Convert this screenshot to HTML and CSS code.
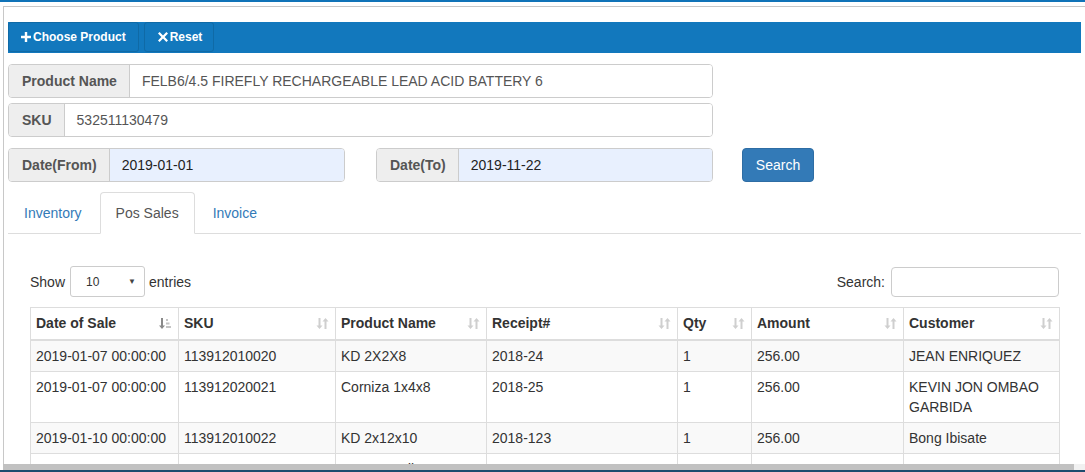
FILE: index.html
```html
<!DOCTYPE html>
<html>
<head>
<meta charset="utf-8">
<link rel="stylesheet" href="styles.css">
</head>
<body>
<div class="topstrip"></div>
<div class="panel">
  <div class="toolbar">
    <button class="tbtn"><svg class="ico" viewBox="0 0 10 10" width="10" height="10"><path d="M3.8 0h2.4v3.8H10v2.4H6.2V10H3.8V6.2H0V3.8h3.8z" fill="#fff"/></svg>Choose Product</button>
    <button class="tbtn reset"><svg class="ico" viewBox="0 0 10 10" width="10" height="10"><path d="M1.6 0L5 3.4 8.4 0 10 1.6 6.6 5 10 8.4 8.4 10 5 6.6 1.6 10 0 8.4 3.4 5 0 1.6z" fill="#fff"/></svg>Reset</button>
  </div>

  <div class="igroup wide">
    <span class="addon">Product Name</span>
    <span class="ival">FELB6/4.5 FIREFLY RECHARGEABLE LEAD ACID BATTERY 6</span>
  </div>
  <div class="igroup wide sku">
    <span class="addon">SKU</span>
    <span class="ival">532511130479</span>
  </div>

  <div class="daterow">
    <div class="igroup date">
      <span class="addon">Date(From)</span>
      <span class="ival auto">2019-01-01</span>
    </div>
    <div class="igroup date to">
      <span class="addon">Date(To)</span>
      <span class="ival auto">2019-11-22</span>
    </div>
    <button class="search-btn">Search</button>
  </div>

  <ul class="tabs">
    <li class="tab">Inventory</li>
    <li class="tab active">Pos Sales</li>
    <li class="tab">Invoice</li>
  </ul>

  <div class="tabcontent">
    <div class="dt-top">
      <div class="length">Show <span class="sel"><span>10</span><span class="caret">▼</span></span> entries</div>
      <div class="filter">Search: <span class="sinput"></span></div>
    </div>

    <table class="dt">
      <colgroup>
        <col style="width:148px"><col style="width:157px"><col style="width:151px"><col style="width:191px"><col style="width:74px"><col style="width:152px"><col style="width:156px">
      </colgroup>
      <thead>
        <tr>
          <th>Date of Sale<svg class="sort asc" viewBox="0 0 13 13" width="13" height="13"><path d="M2 1h2v7.5h2L3 12 0 8.5h2z" fill="#8a8a8a"/><path d="M7 2h2v2H7zM7 5.5h3.5v2H7zM7 9h5v2H7z" fill="#c4c4c4"/></svg></th>
          <th>SKU<svg class="sort" viewBox="0 0 13 13" width="13" height="13"><path d="M2.5 1h2v7.5h2L3.5 12 0.5 8.5h2zM8.5 12h2V4.5h2L9.5 1l-3 3.5h2z" fill="#cfcfcf"/></svg></th>
          <th>Product Name<svg class="sort" viewBox="0 0 13 13" width="13" height="13"><path d="M2.5 1h2v7.5h2L3.5 12 0.5 8.5h2zM8.5 12h2V4.5h2L9.5 1l-3 3.5h2z" fill="#cfcfcf"/></svg></th>
          <th>Receipt#<svg class="sort" viewBox="0 0 13 13" width="13" height="13"><path d="M2.5 1h2v7.5h2L3.5 12 0.5 8.5h2zM8.5 12h2V4.5h2L9.5 1l-3 3.5h2z" fill="#cfcfcf"/></svg></th>
          <th>Qty<svg class="sort" viewBox="0 0 13 13" width="13" height="13"><path d="M2.5 1h2v7.5h2L3.5 12 0.5 8.5h2zM8.5 12h2V4.5h2L9.5 1l-3 3.5h2z" fill="#cfcfcf"/></svg></th>
          <th>Amount<svg class="sort" viewBox="0 0 13 13" width="13" height="13"><path d="M2.5 1h2v7.5h2L3.5 12 0.5 8.5h2zM8.5 12h2V4.5h2L9.5 1l-3 3.5h2z" fill="#cfcfcf"/></svg></th>
          <th>Customer<svg class="sort" viewBox="0 0 13 13" width="13" height="13"><path d="M2.5 1h2v7.5h2L3.5 12 0.5 8.5h2zM8.5 12h2V4.5h2L9.5 1l-3 3.5h2z" fill="#cfcfcf"/></svg></th>
        </tr>
      </thead>
      <tbody>
        <tr class="odd"><td>2019-01-07 00:00:00</td><td>113912010020</td><td>KD 2X2X8</td><td>2018-24</td><td>1</td><td>256.00</td><td>JEAN ENRIQUEZ</td></tr>
        <tr><td>2019-01-07 00:00:00</td><td>113912020021</td><td>Corniza 1x4x8</td><td>2018-25</td><td>1</td><td>256.00</td><td>KEVIN JON OMBAO GARBIDA</td></tr>
        <tr class="odd"><td>2019-01-10 00:00:00</td><td>113912010022</td><td>KD 2x12x10</td><td>2018-123</td><td>1</td><td>256.00</td><td>Bong Ibisate</td></tr>
        <tr><td>2019-01-10 00:00:00</td><td>113912010023</td><td>Rona Sanding 7.50</td><td>2018-33</td><td>1</td><td>150.00</td><td>ADRIEL DAPOAN</td></tr>
      </tbody>
    </table>
  </div>
</div>
<div class="bottombar">
  <div class="hscroll"><div class="thumb"></div><div class="track"></div></div>
  <div class="navy"></div>
</div>
</body>
</html>
```
FILE: styles.css
```css
html, body {
  margin: 0;
  padding: 0;
  height: 472px;
  overflow: hidden;
  background: #fff;
  font-family: "Liberation Sans", Arial, sans-serif;
  font-size: 14px;
  color: #333;
}
.topstrip {
  height: 2px;
  background: #1073b8;
}
.panel {
  margin: 4px 0 0 3px;
  border-left: 1px solid #c8c8c8;
  border-top: 1px solid #c8c8c8;
  padding: 15px 4px 0 4px;
  width: 1073px;
  height: 500px;
}
.toolbar {
  display: flex;
  gap: 5px;
  height: 31px;
  background: #1278bd;
}
.tbtn {
  display: flex;
  align-items: center;
  height: 30px;
  padding: 0 12px 0 12px;
  background: #1278bd;
  border: 1px solid #0f6aa6;
  border-radius: 3px;
  color: #fff;
  font-family: "Liberation Sans", Arial, sans-serif;
  font-weight: bold;
  font-size: 12px;
  cursor: pointer;
}
.tbtn .ico { margin-right: 2px; }
.tbtn.reset { padding: 0 11px 0 13px; }
.igroup {
  display: flex;
  height: 34px;
  box-sizing: border-box;
  border: 1px solid #ccc;
  border-radius: 4px;
  overflow: hidden;
}
.igroup.wide {
  width: 705px;
  margin-top: 11px;
}
.igroup.sku { margin-top: 5px; }
.addon {
  display: flex;
  align-items: center;
  padding: 0 12px 0 13px;
  background: #eee;
  border-right: 1px solid #ccc;
  font-weight: bold;
  color: #555;
}
.ival {
  flex: 1;
  display: flex;
  align-items: center;
  padding: 0 12px;
  color: #555;
  background: #fff;
}
.ival.auto {
  background: #e8f0fe;
  color: #222;
}
.daterow {
  display: flex;
  margin-top: 11px;
}
.igroup.date { width: 337px; }
.igroup.to { margin-left: 31px; }
.search-btn {
  margin-left: 29px;
  height: 34px;
  width: 72px;
  background: #337ab7;
  border: 1px solid #2e6da4;
  border-radius: 4px;
  color: #fff;
  font-family: "Liberation Sans", Arial, sans-serif;
  font-size: 14px;
  padding: 0;
}
.tabs {
  list-style: none;
  margin: 10px 0 0 0;
  padding: 0;
  display: flex;
  border-bottom: 1px solid #ddd;
  height: 41px;
}
.tab {
  padding: 10px 15px;
  line-height: 20px;
  margin-right: 2px;
  color: #337ab7;
  border: 1px solid transparent;
  border-radius: 4px 4px 0 0;
  height: 20px;
}
.tab.active {
  color: #555;
  border-color: #ddd;
  border-bottom-color: #fff;
  background: #fff;
}
.tabcontent {
  padding: 32px 22px 0 22px;
}
.dt-top {
  display: flex;
  justify-content: space-between;
  align-items: center;
  height: 31px;
}
.length, .filter {
  display: flex;
  align-items: center;
  color: #333;
}
.sel {
  display: flex;
  align-items: center;
  justify-content: space-between;
  box-sizing: border-box;
  width: 75px;
  height: 31px;
  margin: 0 4px 0 5px;
  padding: 0 8px 0 15px;
  border: 1px solid #ccc;
  border-radius: 3px;
  font-size: 12px;
  color: #333;
}
.caret { font-size: 8px; color: #444; }
.sinput {
  display: block;
  box-sizing: border-box;
  width: 168px;
  height: 30px;
  margin-left: 6px;
  border: 1px solid #ccc;
  border-radius: 4px;
}
.dt {
  margin-top: 10px;
  width: 1029px;
  table-layout: fixed;
  border-collapse: collapse;
}
.dt th, .dt td {
  border: 1px solid #ddd;
  text-align: left;
  vertical-align: top;
  line-height: 20px;
}
.dt th {
  padding: 5px 6px 5px 5px;
  font-weight: bold;
  border-bottom: 2px solid #ddd;
  height: 21px;
}
.dt td {
  padding: 5px 5px;
  color: #333;
}
.dt tr.odd td { background: #f9f9f9; }
.sort {
  float: right;
  margin-top: 4px;
}
.bottombar {
  position: fixed;
  left: 0;
  right: 0;
  bottom: 0;
}
.hscroll {
  display: flex;
  height: 6px;
  padding-left: 3px;
  background: #fff;
}
.thumb { width: 1071px; background: #c1c1c1; }
.track { flex: 1; background: #f1f1f1; }
.navy { height: 2px; background: #1d4b6e; }
```
